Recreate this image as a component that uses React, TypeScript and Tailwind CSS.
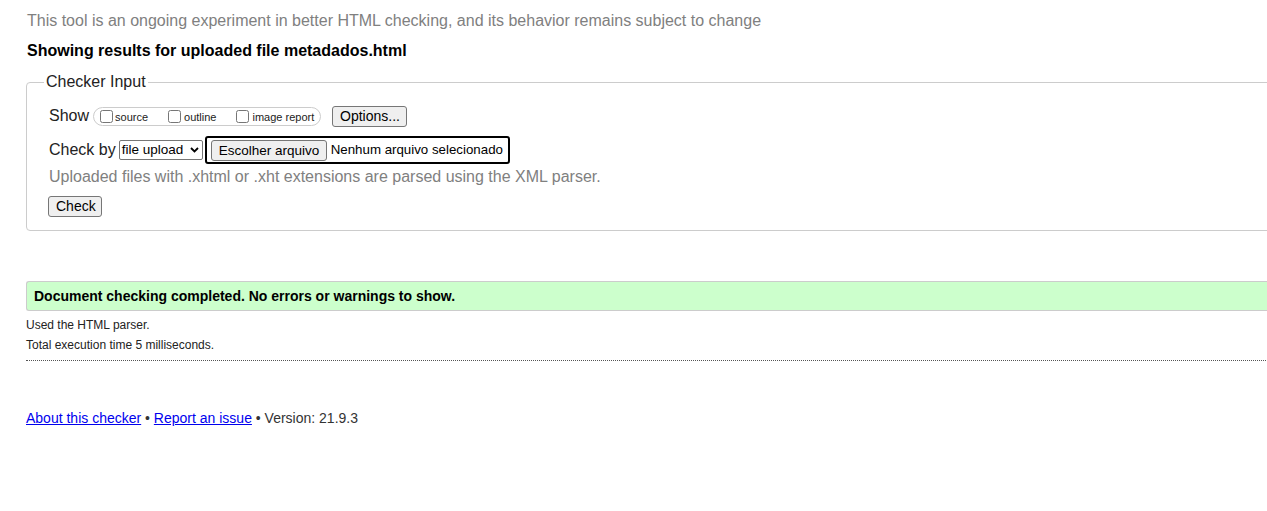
import React from "react";

const font = { fontFamily: '"Liberation Sans", Arial, sans-serif' };

function Btn({ children, className = "" }: { children: React.ReactNode; className?: string }) {
  return (
    <button
      type="button"
      className={`shrink-0 whitespace-nowrap h-[21px] px-[7px] bg-[#efefef] border border-[#767676] rounded-[3px] leading-[17px] text-black ${className}`}
    >
      {children}
    </button>
  );
}

export default function App() {
  return (
    <div className="w-[1267px] h-[511px] overflow-hidden bg-white" style={font}>
      <div className="pl-[26px] w-[1320px]">
        <div className="mt-[12px] pl-[1px] text-[16px] leading-[18px] text-[#808080] whitespace-nowrap">
          This tool is an ongoing experiment in better HTML checking, and its behavior remains subject to change
        </div>
        <div className="mt-[12px] pl-[1px] text-[16px] leading-[18px] font-bold text-black">
          Showing results for uploaded file metadados.html
        </div>

        <fieldset className="mt-[13px] border border-[#cccccc] rounded-[4px] px-[22px] pb-[12px] min-w-0">
          <legend className="-ml-[5px] px-[2px] text-[16px] leading-[18px] text-[#222]">Checker Input</legend>

          <div className="mt-[14px] h-[22px] flex items-center">
            <span className="text-[16px] leading-[18px] text-[#222]">Show</span>
            <span className="ml-[4px] h-[19px] w-[228px] shrink-0 border border-[#cccccc] rounded-full flex items-center pl-[6px] whitespace-nowrap">
              <label className="flex items-center text-[11px] leading-[13px] text-[#222]">
                <input type="checkbox" className="m-0 w-[13px] h-[13px]" />
                <span className="ml-[2px] mt-[3px]">source</span>
              </label>
              <label className="ml-[20px] flex items-center text-[11px] leading-[13px] text-[#222]">
                <input type="checkbox" className="m-0 w-[13px] h-[13px]" />
                <span className="ml-[3px] mt-[3px]">outline</span>
              </label>
              <label className="ml-[20px] flex items-center text-[11px] leading-[13px] text-[#222]">
                <input type="checkbox" className="m-0 w-[13px] h-[13px]" />
                <span className="ml-[3px] mt-[3px]">image report</span>
              </label>
            </span>
            <Btn className="ml-[11px] w-[75px] px-0 text-[14px]">Options...</Btn>
          </div>

          <div className="mt-[9px] h-[28px] flex items-center whitespace-nowrap">
            <span className="text-[16px] leading-[18px] text-[#222]">Check by</span>
            <span className="ml-[3px] shrink-0 h-[20px] w-[84px] border border-[#767676] rounded-[2px] flex items-center justify-between pl-[2px] pr-[3px] text-[13.5px] leading-[16px] text-black">
              <span>file upload</span>
              <svg width="9" height="6" viewBox="0 0 9 6">
                <path d="M1 1 L4.5 4.5 L8 1" fill="none" stroke="#000" strokeWidth="1.8" />
              </svg>
            </span>
            <span className="ml-[2px] shrink-0 h-[28px] w-[305px] border-2 border-black rounded-[3px] flex items-center pl-[4px]">
              <Btn className="w-[116px] h-[20px] px-0 text-[13.5px]">Escolher arquivo</Btn>
              <span className="ml-[4px] whitespace-nowrap text-[13.3px] leading-[16px] text-black">Nenhum arquivo selecionado</span>
            </span>
          </div>

          <div className="mt-[4px] text-[16px] leading-[18px] text-[#808080] whitespace-nowrap">
            Uploaded files with .xhtml or .xht extensions are parsed using the XML parser.
          </div>

          <div className="mt-[8px] -ml-[1px]">
            <Btn className="w-[54px] h-[20px] px-0 text-[14px]">Check</Btn>
          </div>
        </fieldset>

        <div className="mt-[50px] h-[30px] bg-[#ccffcc] border border-r-0 border-[#cccccc] rounded-l-[3px] flex items-center pl-[7px]">
          <span className="text-[14px] leading-[16px] font-bold text-black">
            Document checking completed. No errors or warnings to show.
          </span>
        </div>

        <div className="mt-[7px] text-[12px] leading-[14px] text-[#222]">Used the HTML parser.</div>
        <div className="mt-[6px] text-[12px] leading-[14px] text-[#222]">Total execution time 5 milliseconds.</div>
        <div className="mt-[8px] border-b border-dotted border-[#555]"></div>

        <div className="mt-[49px] text-[14px] leading-[16px] text-[#333]">
          <a href="#" className="text-[#0000ee] underline">About this checker</a>
          {" \u2022 "}
          <a href="#" className="text-[#0000ee] underline">Report an issue</a>
          {" \u2022 Version: 21.9.3"}
        </div>
      </div>
    </div>
  );
}
